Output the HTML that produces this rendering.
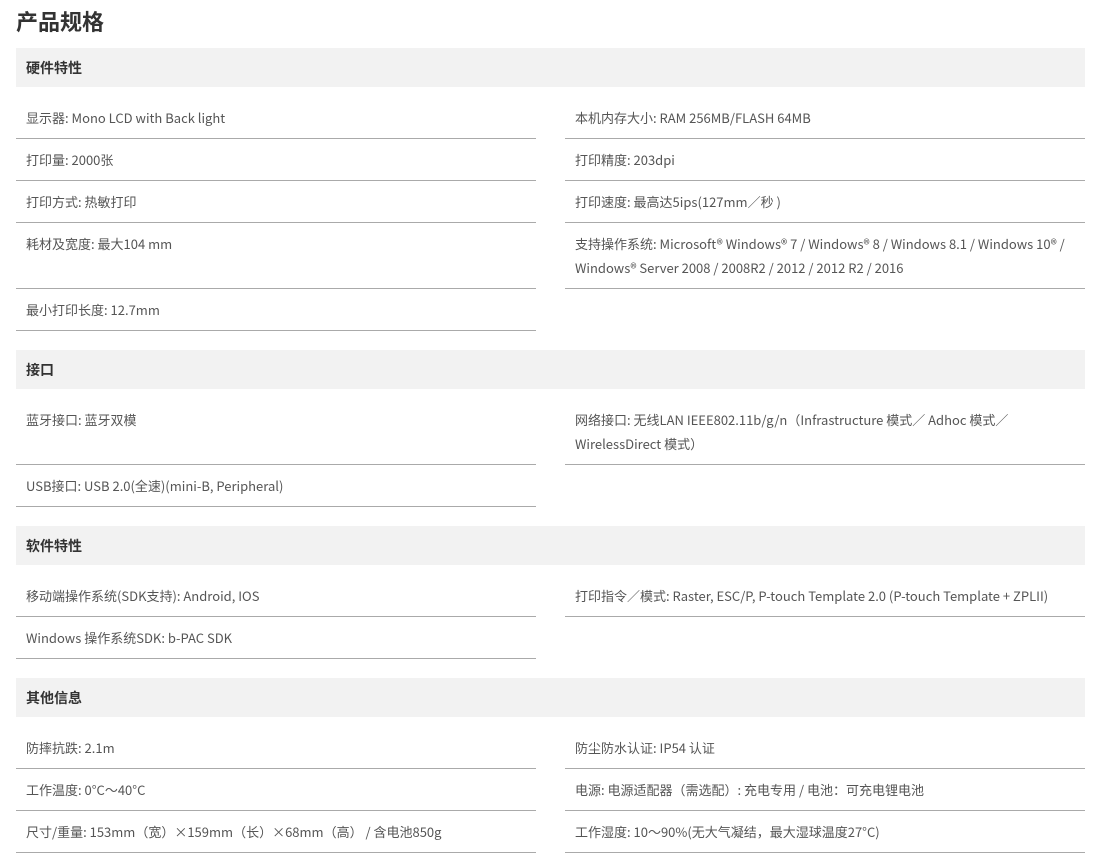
<!DOCTYPE html>
<html><head><meta charset="utf-8"><style>
*{margin:0;padding:0;box-sizing:border-box}
body{width:1104px;height:867px;background:#fff;font-family:"Noto Sans CJK SC","Liberation Sans",sans-serif;color:#555;font-size:13px;overflow:hidden}
h1{position:absolute;left:16px;top:4px;font-size:22px;font-weight:bold;color:#333;line-height:34px}
.sec{position:absolute;left:16px;width:1069px}
.hd{height:39px;background:#f2f2f2;padding-left:10px;padding-top:2px;font-weight:bold;font-size:14px;color:#333;line-height:37px}
.g{display:grid;grid-template-columns:520px 520px;column-gap:29px;margin-top:10px}
.c{border-bottom:1px solid #aaa;padding:9px 10px 8px;line-height:24px;min-height:42px}
.e{border:none}
</style></head><body>
<h1>产品规格</h1>
<div class="sec" style="top:48px"><div class="hd">硬件特性</div><div class="g">
<div class="c">显示器: Mono LCD with Back light</div><div class="c">本机内存大小: RAM 256MB/FLASH 64MB</div>
<div class="c">打印量: 2000张</div><div class="c">打印精度: 203dpi</div>
<div class="c">打印方式: 热敏打印</div><div class="c">打印速度: 最高达5ips(127mm／秒 )</div>
<div class="c">耗材及宽度: 最大104 mm</div><div class="c">支持操作系统: Microsoft® Windows® 7 / Windows® 8 / Windows 8.1 / Windows 10® / Windows® Server 2008 / 2008R2 / 2012 / 2012 R2 / 2016</div>
<div class="c">最小打印长度: 12.7mm</div><div class="c e"></div>
</div></div>
<div class="sec" style="top:350px"><div class="hd">接口</div><div class="g">
<div class="c">蓝牙接口: 蓝牙双模</div><div class="c">网络接口: 无线LAN IEEE802.11b/g/n（Infrastructure 模式／ Adhoc 模式／ WirelessDirect 模式）</div>
<div class="c">USB接口: USB 2.0(全速)(mini-B, Peripheral)</div><div class="c e"></div>
</div></div>
<div class="sec" style="top:526px"><div class="hd">软件特性</div><div class="g">
<div class="c">移动端操作系统(SDK支持): Android, IOS</div><div class="c">打印指令／模式: Raster, ESC/P, P-touch Template 2.0 (P-touch Template + ZPLII)</div>
<div class="c">Windows 操作系统SDK: b-PAC SDK</div><div class="c e"></div>
</div></div>
<div class="sec" style="top:678px"><div class="hd">其他信息</div><div class="g">
<div class="c">防摔抗跌: 2.1m</div><div class="c">防尘防水认证: IP54 认证</div>
<div class="c">工作温度: 0°C～40°C</div><div class="c">电源: 电源适配器（需选配）: 充电专用 / 电池：可充电锂电池</div>
<div class="c">尺寸/重量: 153mm（宽）×159mm（长）×68mm（高） / 含电池850g</div><div class="c">工作湿度: 10～90%(无大气凝结，最大湿球温度27°C)</div>
</div></div>
</body></html>
